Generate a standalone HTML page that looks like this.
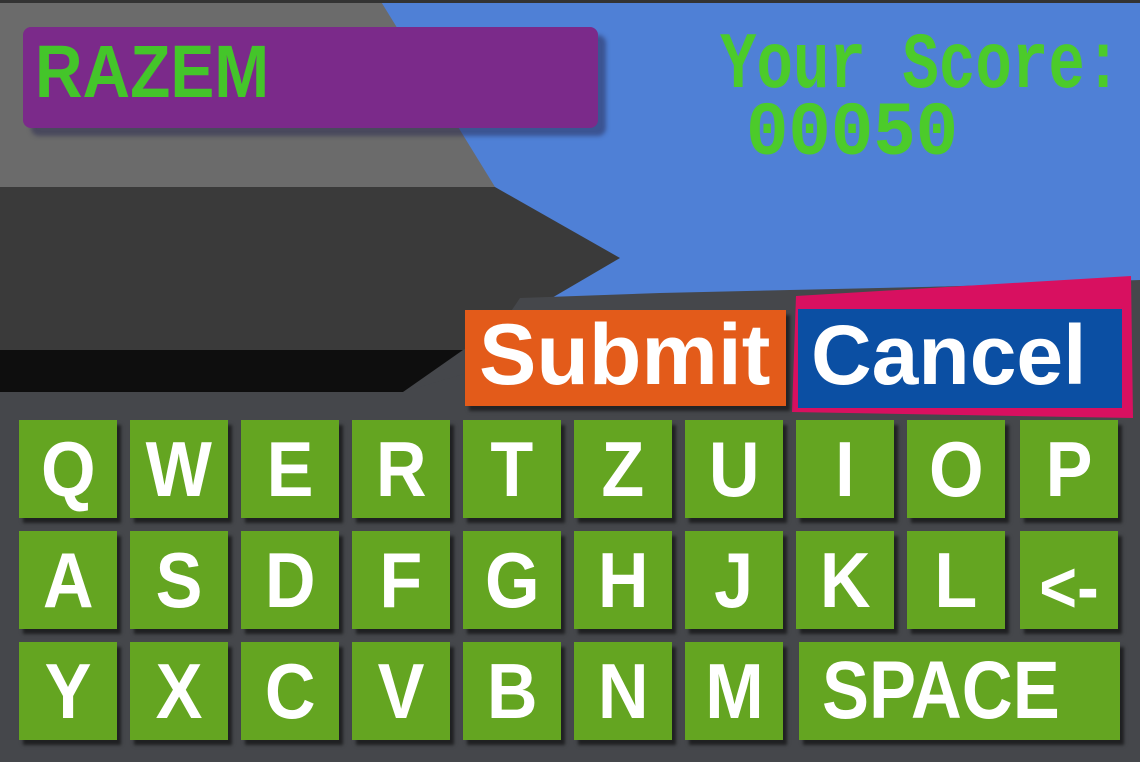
<!DOCTYPE html>
<html><head><meta charset="utf-8"><style>
html,body{margin:0;padding:0;}
body{width:1140px;height:762px;position:relative;overflow:hidden;background:#45474b;font-family:"Liberation Sans",sans-serif;}
svg.bg{position:absolute;left:0;top:0;}
.abs{position:absolute;}
.key{position:absolute;width:98px;height:98px;background:#64a521;box-shadow:4px 5px 3px rgba(0,0,0,.55);color:#fff;font-weight:bold;font-size:78px;display:flex;align-items:center;justify-content:center;overflow:hidden;}
.key span{display:inline-block;transform:scaleX(.9);line-height:1;}
</style></head><body>
<svg class="bg" width="1140" height="762">
<rect x="0" y="0" width="1140" height="762" fill="#45474b"/>
<polygon points="360,0 1140,0 1140,280 660,296 470,345 400,392 0,392 0,0" fill="#4f80d6"/>
<polygon points="0,0 380,0 495,187 0,187" fill="#6b6b6b"/>
<polygon points="0,187 495,187 620,258 463,350 0,350" fill="#3a3a3a"/>
<polygon points="0,350 463,350 403,392 0,392" fill="#0e0e0e"/>
<polygon points="0,392 403,392 470,372 520,298 660,293 1140,282 1140,762 0,762" fill="#45474b"/>
<rect x="0" y="0" width="1140" height="3" fill="#333"/>
<polygon points="796,296 1131,276 1133,418 792,412" fill="#d81060"/>
</svg>
<div class="abs" style="left:23px;top:27px;width:575px;height:101px;background:#7b2a8a;border-radius:8px;box-shadow:8px 8px 4px rgba(40,40,80,.5);"></div>
<div class="abs" style="left:35px;top:32px;color:#44c52a;font-weight:bold;font-size:74px;line-height:80px;transform:scaleX(.89);transform-origin:left top;">RAZEM</div>
<div class="abs" style="left:720px;top:27px;color:#4ccb2a;font-family:'Liberation Mono',monospace;font-weight:bold;font-size:80px;line-height:80px;transform:scaleX(.76);transform-origin:left top;white-space:nowrap;">Your Score:</div>
<div class="abs" style="left:746px;top:96px;color:#4ccb2a;font-family:'Liberation Mono',monospace;font-weight:bold;font-size:76px;line-height:76px;transform:scaleX(.93);transform-origin:left top;">00050</div>
<div class="abs" style="left:465px;top:310px;width:321px;height:96px;background:#e35b1a;box-shadow:4px 5px 3px rgba(0,0,0,.5);"></div>
<div class="abs" style="left:479px;top:305px;color:#fff;font-weight:bold;font-size:86px;line-height:100px;">Submit</div>
<div class="abs" style="left:798px;top:309px;width:324px;height:99px;background:#0b4fa3;"></div>
<div class="abs" style="left:811px;top:305px;color:#fff;font-weight:bold;font-size:84px;line-height:100px;">Cancel</div>

<div class="key" style="left:19px;top:420px"><span>Q</span></div>
<div class="key" style="left:130px;top:420px"><span>W</span></div>
<div class="key" style="left:241px;top:420px"><span>E</span></div>
<div class="key" style="left:352px;top:420px"><span>R</span></div>
<div class="key" style="left:463px;top:420px"><span>T</span></div>
<div class="key" style="left:574px;top:420px"><span>Z</span></div>
<div class="key" style="left:685px;top:420px"><span>U</span></div>
<div class="key" style="left:796px;top:420px"><span>I</span></div>
<div class="key" style="left:907px;top:420px"><span>O</span></div>
<div class="key" style="left:1020px;top:420px"><span>P</span></div>

<div class="key" style="left:19px;top:531px"><span>A</span></div>
<div class="key" style="left:130px;top:531px"><span>S</span></div>
<div class="key" style="left:241px;top:531px"><span>D</span></div>
<div class="key" style="left:352px;top:531px"><span>F</span></div>
<div class="key" style="left:463px;top:531px"><span>G</span></div>
<div class="key" style="left:574px;top:531px"><span>H</span></div>
<div class="key" style="left:685px;top:531px"><span>J</span></div>
<div class="key" style="left:796px;top:531px"><span>K</span></div>
<div class="key" style="left:907px;top:531px"><span>L</span></div>
<div class="key" style="left:1020px;top:531px;font-size:72px;padding-top:16px;box-sizing:border-box"><span>&lt;-</span></div>

<div class="key" style="left:19px;top:642px"><span>Y</span></div>
<div class="key" style="left:130px;top:642px"><span>X</span></div>
<div class="key" style="left:241px;top:642px"><span>C</span></div>
<div class="key" style="left:352px;top:642px"><span>V</span></div>
<div class="key" style="left:463px;top:642px"><span>B</span></div>
<div class="key" style="left:574px;top:642px"><span>N</span></div>
<div class="key" style="left:685px;top:642px"><span>M</span></div>
<div class="key" style="left:799px;top:642px;width:321px;justify-content:flex-start;font-size:82px;"><span style="transform:scaleX(.86);transform-origin:left center;margin-left:23px;">SPACE</span></div>
</body></html>
